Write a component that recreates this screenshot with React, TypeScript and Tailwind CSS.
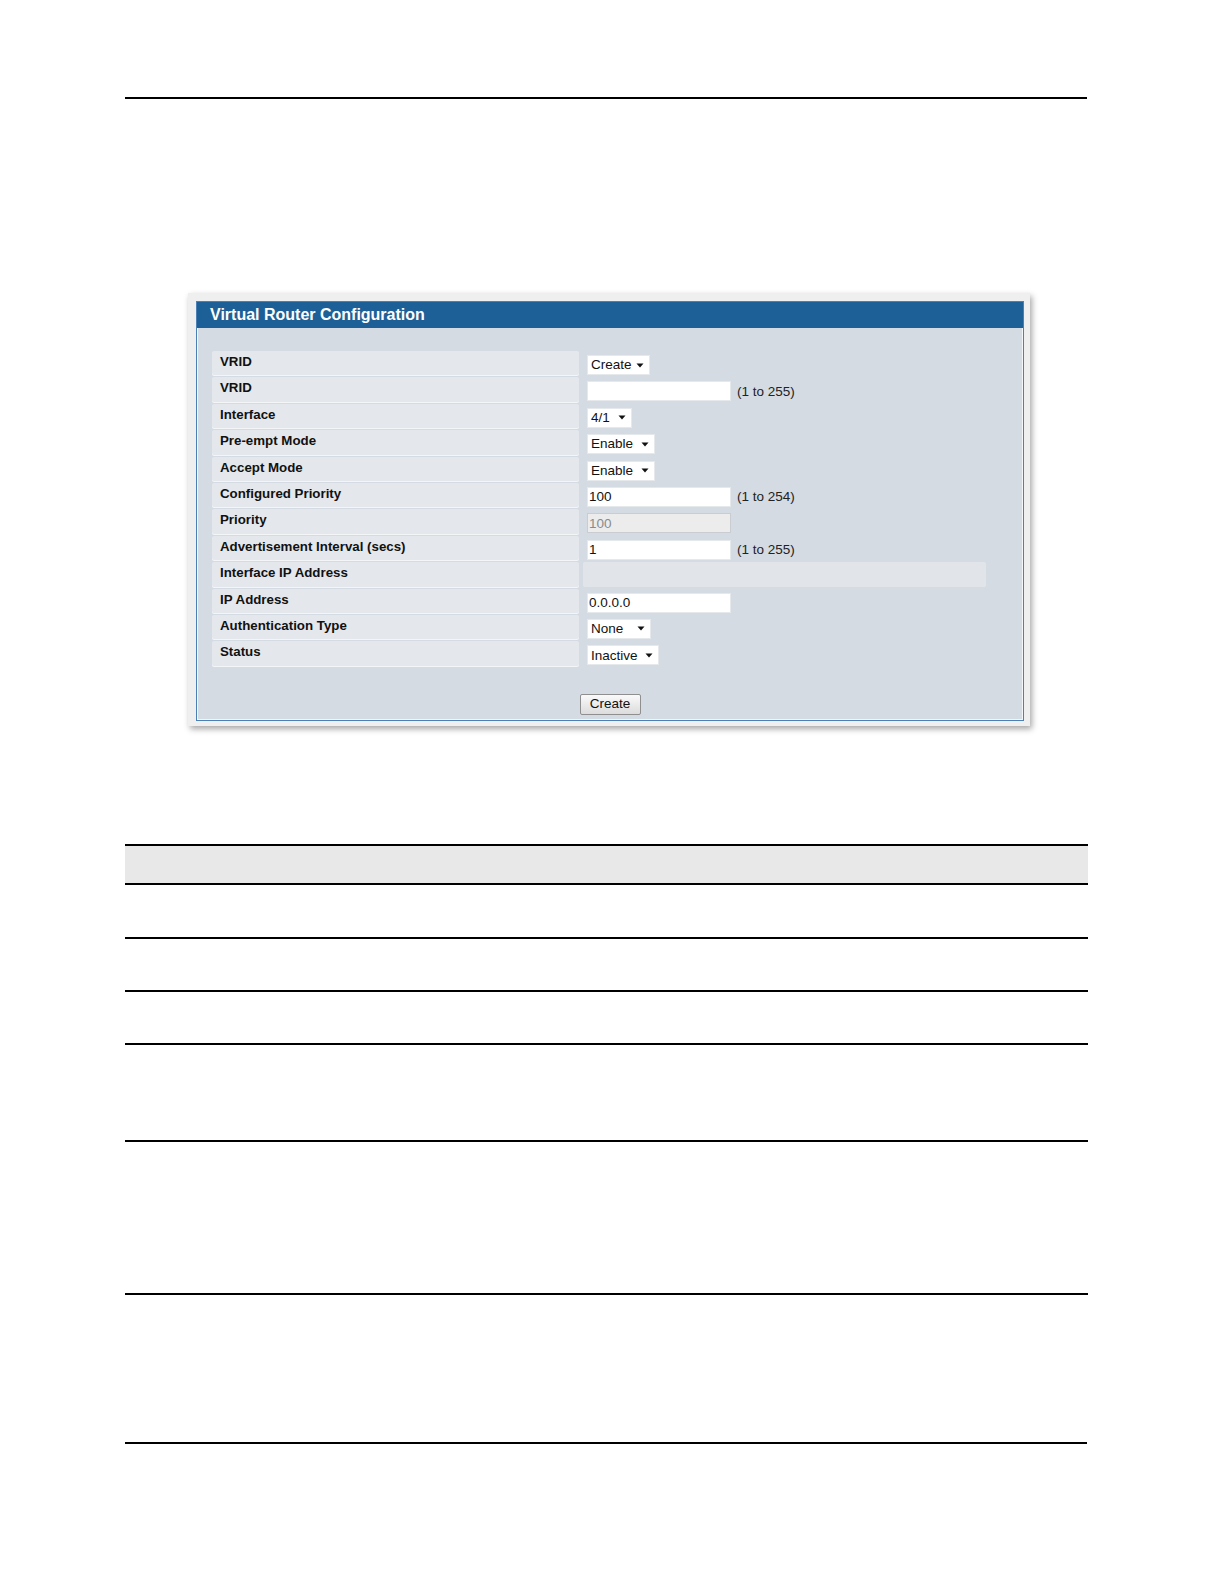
import React from 'react';

type Row = {
  label: string;
  kind: 'select' | 'text' | 'disabled' | 'wide';
  value?: string;
  width?: number;
  hint?: string;
};

const rows: Row[] = [
  { label: 'VRID', kind: 'select', value: 'Create', width: 63 },
  { label: 'VRID', kind: 'text', value: '', hint: '(1 to 255)' },
  { label: 'Interface', kind: 'select', value: '4/1', width: 45 },
  { label: 'Pre-empt Mode', kind: 'select', value: 'Enable', width: 68 },
  { label: 'Accept Mode', kind: 'select', value: 'Enable', width: 68 },
  { label: 'Configured Priority', kind: 'text', value: '100', hint: '(1 to 254)' },
  { label: 'Priority', kind: 'disabled', value: '100' },
  { label: 'Advertisement Interval (secs)', kind: 'text', value: '1', hint: '(1 to 255)' },
  { label: 'Interface IP Address', kind: 'wide' },
  { label: 'IP Address', kind: 'text', value: '0.0.0.0' },
  { label: 'Authentication Type', kind: 'select', value: 'None', width: 64 },
  { label: 'Status', kind: 'select', value: 'Inactive', width: 72 },
];

function Arrow() {
  return (
    <svg width="8" height="5" viewBox="0 0 8 5" className="shrink-0">
      <path d="M0.5 0.5 L7.5 0.5 L4 4.5 Z" fill="#111" />
    </svg>
  );
}

function FakeSelect({ value, width }: { value: string; width: number }) {
  return (
    <div
      className="h-[20px] bg-white flex items-center justify-between pl-[3px] pr-[5px] text-[13.5px] text-[#111] leading-none border border-[#e6e9ec]"
      style={{ width }}
    >
      <span>{value}</span>
      <Arrow />
    </div>
  );
}

function Control({ row }: { row: Row }) {
  if (row.kind === 'select') return <FakeSelect value={row.value!} width={row.width!} />;
  const disabled = row.kind === 'disabled';
  return (
    <div className="flex items-center gap-[6px]">
      <div
        className={
          disabled
            ? 'w-[144px] h-[20px] bg-[#ececec] border border-[#c9cdd1] pl-[1px] flex items-center text-[13.5px] text-[#8a8a8a] leading-none'
            : 'w-[144px] h-[20px] bg-white border border-[#e6e9ec] pl-[1px] flex items-center text-[13.5px] text-[#111] leading-none'
        }
      >
        {row.value}
      </div>
      {row.hint && <span className="text-[13.5px] text-[#222] leading-none">{row.hint}</span>}
    </div>
  );
}

function ConfigPanel() {
  return (
    <div className="w-[842px] pt-[8px] pl-[8px] pr-[6px] pb-[5px] bg-[#efefef] shadow-[2px_3px_6px_rgba(0,0,0,0.35)]">
      <div className="border border-[#4a80b4] bg-[#d4dbe2] shadow-[inset_0_0_0_1px_#f4f7fa]">
        <div className="h-[26px] bg-[#1d5f97] pl-[13px] flex items-center text-white font-bold text-[16px] leading-none">
          Virtual Router Configuration
        </div>
        <div className="pt-[23px] px-[15px]">
          {rows.map((row, i) => (
            <div key={i} className="h-[26.4px] flex">
              <div className="w-[367px] h-[24.4px] bg-[#e4e8ec] rounded-[2px] pl-[8px] pt-[3px] text-[13.3px] font-bold text-[#111] leading-[15px] shadow-[0_1px_0_#f3f5f7]">
                {row.label}
              </div>
              {row.kind === 'wide' ? (
                <div className="ml-[4px] w-[403px] h-[24.4px] bg-[#e1e5ea] rounded-[2px]" />
              ) : (
                <div className="ml-[4px] pl-[4px] pt-[4px]">
                  <Control row={row} />
                </div>
              )}
            </div>
          ))}
          <div className="flex justify-center pt-[26px] pb-[5px]">
            <div className="w-[61px] h-[21px] border border-[#8f8f8f] rounded-[2px] bg-gradient-to-b from-[#fafafa] to-[#dcdcdc] flex items-center justify-center text-[13.5px] text-[#111] leading-none">
              Create
            </div>
          </div>
        </div>
      </div>
    </div>
  );
}

const tableRows = [54, 53, 53, 97, 153];

export default function App() {
  return (
    <div className="w-full h-[1584px] overflow-hidden bg-white font-['Liberation_Sans',Arial,sans-serif]">
      <div className="pt-[97px] ml-[125px] w-[962px]">
        <div className="h-[2px] bg-black" />
        <div className="mt-[194px] ml-[63px]">
          <ConfigPanel />
        </div>
        <div className="mt-[118px] w-[963px]">
          <div className="h-[2px] bg-black" />
          <div className="h-[37px] bg-[#e8e8e8]" />
          {tableRows.map((h, i) => (
            <div key={i} style={{ height: h }} className="border-t-2 border-black" />
          ))}
          <div className="h-[2px] bg-black" />
        </div>
        <div className="mt-[147px] h-[2px] bg-black" />
      </div>
    </div>
  );
}
